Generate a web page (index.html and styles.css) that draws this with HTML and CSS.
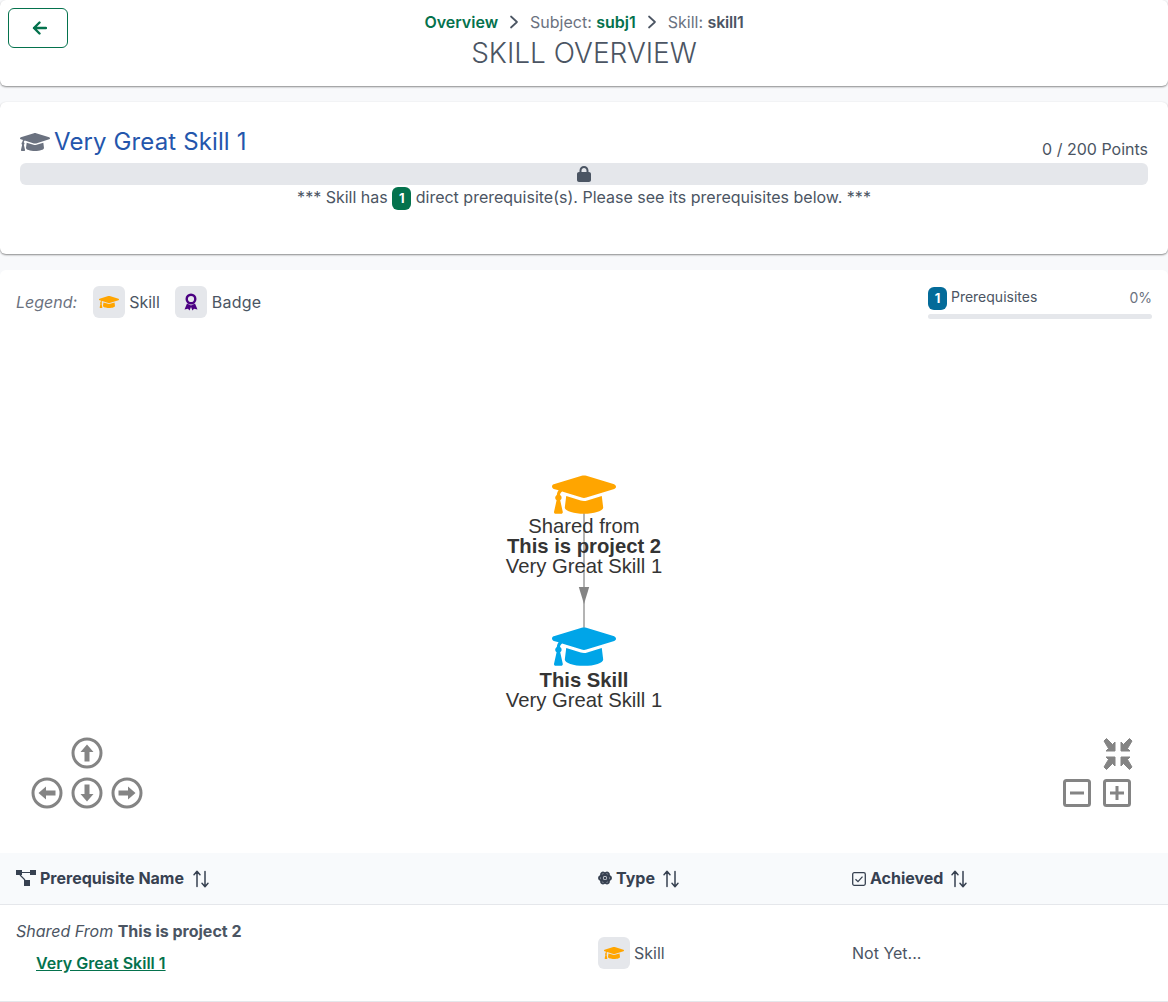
FILE: index.html
```html
<!DOCTYPE html>
<html lang="en">
<head>
  <meta charset="UTF-8">
  <title>Skill Overview</title>
  <link rel="stylesheet" href="styles.css">
</head>
<body>
  <svg class="defs">
    <defs>
      <symbol id="cap" viewBox="0 0 640 512">
        <path d="M622.340 153.200L343.400 67.500c-15.200-4.670-31.600-4.670-46.790 0L17.660 153.200c-23.540 7.230-23.540 38.360 0 45.590l48.630 14.940c-10.670 13.190-17.230 29.280-17.880 46.900C38.780 266.150 32 276.110 32 288c0 10.780 5.680 19.850 13.860 25.650L20.330 428.530C18.110 438.520 25.710 448 35.940 448h56.110c10.240 0 17.840-9.480 15.620-19.470L82.140 313.650C90.320 307.850 96 298.780 96 288c0-11.570-6.470-21.250-15.660-26.870.76-15.020 8.440-28.300 20.690-36.720L296.600 285.500c9.060 2.780 26.440 6.250 46.790 0l278.950-85.700c23.550-7.240 23.550-38.360 0-45.600zM352.790 315.090c-28.530 8.760-52.840 3.920-65.590 0l-145.020-44.550L128 384c0 35.350 85.960 64 192 64s192-28.650 192-64l-14.180-113.470-145.030 44.560z"/>
      </symbol>
      <symbol id="sort" viewBox="0 0 18 18">
        <path d="M5 16.500V1.500M2 4.700 5 1.300l3 3.400M13 1.500v15M10 13.300l3 3.400 3-3.400" fill="none" stroke="currentColor" stroke-width="1.500" stroke-linecap="round" stroke-linejoin="round"/>
      </symbol>
    </defs>
  </svg>

  <header class="card top">
    <button class="back" aria-label="Back">
      <svg width="15" height="14" viewBox="0 0 15 14"><path d="M14 7H2M7.500 1.500 2 7l5.500 5.500" fill="none" stroke="currentColor" stroke-width="2.400" stroke-linecap="round" stroke-linejoin="round"/></svg>
    </button>
    <nav class="crumbs">
      <a class="crumb-link">Overview</a>
      <svg class="chev" width="10" height="14" viewBox="0 0 10 14"><path d="M2 1.500 8 7l-6 5.500" fill="none" stroke="currentColor" stroke-width="1.700" stroke-linecap="round" stroke-linejoin="round"/></svg>
      <span>Subject: <a class="crumb-link">subj1</a></span>
      <svg class="chev" width="10" height="14" viewBox="0 0 10 14"><path d="M2 1.500 8 7l-6 5.500" fill="none" stroke="currentColor" stroke-width="1.700" stroke-linecap="round" stroke-linejoin="round"/></svg>
      <span>Skill: <b class="crumb-current">skill1</b></span>
    </nav>
    <h1>SKILL OVERVIEW</h1>
  </header>

  <section class="card skill">
    <div class="skill-head">
      <h2><svg class="skill-cap" width="30" height="24"><use href="#cap"/></svg>Very Great Skill 1</h2>
      <span class="points">0 / 200 Points</span>
    </div>
    <div class="locked-bar">
      <svg width="14" height="16" viewBox="0 0 448 512"><path d="M144 144v48H304V144c0-44.200-35.800-80-80-80s-80 35.800-80 80zM80 192V144C80 64.500 144.500 0 224 0s144 64.500 144 144v48h16c35.300 0 64 28.700 64 64V448c0 35.300-28.700 64-64 64H64c-35.300 0-64-28.700-64-64V256c0-35.300 28.700-64 64-64H80z"/></svg>
    </div>
    <p class="notice">*** Skill has <span class="tag green">1</span> direct prerequisite(s). Please see its prerequisites below. ***</p>
  </section>

  <section class="card deps">
    <div class="legend-row">
      <div class="legend">
        <i class="legend-title">Legend:</i>
        <span class="legend-item"><span class="icon-box"><svg class="orange" width="20" height="16"><use href="#cap"/></svg></span>Skill</span>
        <span class="legend-item"><span class="icon-box">
          <svg width="14" height="18" viewBox="0 0 14 18"><circle cx="7" cy="6" r="4.300" fill="none" stroke="#4b0082" stroke-width="2.400"/><path d="M3 10.500.5 16.500 4 15.800l1.500 1.700L7 14l1.500 3.500 1.500-1.700 3.500.7-2.500-6-4 2z" fill="#4b0082"/></svg>
        </span><span class="badge-label">Badge</span></span>
      </div>
      <div class="progress">
        <div class="progress-label"><span><span class="tag blue">1</span> Prerequisites</span><span class="pct">0%</span></div>
        <div class="progress-track"></div>
      </div>
    </div>

    <div class="graph">
      <svg class="graph-svg" width="1168" height="523" viewBox="0 330 1168 523">
        <path d="M584 505V628" stroke="#b4b4b4" stroke-width="2"/>
        <path d="M578.800 587H589.200L584 604z" fill="#848484"/>
        <use href="#cap" x="552" y="469" width="64" height="51.200" fill="#ffa500"/>
        <use href="#cap" x="552" y="621" width="64" height="51.200" fill="#00a5e8"/>
        <text class="node" x="584" y="533">Shared from</text>
        <text class="node" x="584" y="553" font-weight="700">This is project 2</text>
        <text class="node" x="584" y="573">Very Great Skill 1</text>
        <text class="node" x="584" y="687" font-weight="700">This Skill</text>
        <text class="node" x="584" y="707">Very Great Skill 1</text>

        <g class="ctl">
          <circle cx="87" cy="753" r="14"/><circle cx="47" cy="793" r="14"/><circle cx="87" cy="793" r="14"/><circle cx="127" cy="793" r="14"/>
          <rect x="1064.500" y="780.500" width="25" height="25" rx="2"/><rect x="1104.500" y="780.500" width="25" height="25" rx="2"/>
          <path d="M1070 793H1084M1110 793H1124M1117 786V800"/>
        </g>
        <g class="ctl-fill">
          <path d="M87 744.500l6.500 7.500H89.500v9.500h-5V752H80.500z"/>
          <path d="M87 801.500l6.500-7.500H89.500v-9.500h-5V794H80.500z"/>
          <path d="M38.500 793l7.500-6.500v4h9.500v5H46v4z"/>
          <path d="M135.500 793l-7.500-6.500v4h-9.500v5H128v4z"/>
          <path class="compress" d="M1104 741l2.500-2.500 6 6 2.500-2.500v9h-9l2.500-2.500zM1132 741l-2.500-2.500-6 6-2.500-2.500v9h9l-2.500-2.500zM1104 767l2.500 2.500 6-6 2.500 2.500v-9h-9l2.500 2.500zM1132 767l-2.500 2.500-6-6-2.500 2.500v-9h9l-2.500 2.500z"/>
        </g>
      </svg>
    </div>

    <table class="deps-table">
      <thead>
        <tr>
          <th class="col-name"><svg class="th-icon" width="20" height="16" viewBox="0 0 20 16"><path d="M0 0h6v5H0zM14 0h6v5h-6zM8 10h6v6H8z"/><path d="M6 2.500h8M4 5l5 5" stroke="currentColor" stroke-width="1.200" fill="none"/></svg>Prerequisite Name<svg class="sort" width="18" height="18"><use href="#sort"/></svg></th>
          <th class="col-type"><svg class="th-icon" width="14" height="16" viewBox="0 0 14 16"><ellipse cx="7" cy="8" rx="6" ry="3" fill="none" stroke="currentColor" stroke-width="2"/><ellipse cx="7" cy="8" rx="6" ry="3" fill="none" stroke="currentColor" stroke-width="2" transform="rotate(60 7 8)"/><ellipse cx="7" cy="8" rx="6" ry="3" fill="none" stroke="currentColor" stroke-width="2" transform="rotate(120 7 8)"/><circle cx="7" cy="8" r="1.500"/></svg>Type<svg class="sort sort-tight" width="18" height="18"><use href="#sort"/></svg></th>
          <th class="col-ach"><svg class="th-icon" width="14" height="14" viewBox="0 0 14 14"><rect x=".7" y=".7" width="12.600" height="12.600" rx="1.500" fill="none" stroke="currentColor" stroke-width="1.300"/><path d="M3.500 7.200 6 9.600l4.500-5" fill="none" stroke="currentColor" stroke-width="1.300"/></svg>Achieved<svg class="sort sort-tight" width="18" height="18"><use href="#sort"/></svg></th>
        </tr>
      </thead>
      <tbody>
        <tr>
          <td class="name-cell">
            <div class="shared"><i>Shared From</i> <b>This is project 2</b></div>
            <a class="dep-link">Very Great Skill 1</a>
          </td>
          <td><span class="type-cell"><span class="icon-box"><svg class="orange" width="20" height="16"><use href="#cap"/></svg></span>Skill</span></td>
          <td>Not Yet...</td>
        </tr>
      </tbody>
    </table>
  </section>
</body>
</html>
```

FILE: styles.css
```css
:root {
  --green: #04724d;
  --text: #4b5563;
  --dark: #374151;
  --grey-box: #e5e7eb;
  --shadow: 0 1px 2px rgba(0, 0, 0, 0.45);
}

* {
  box-sizing: border-box;
}

body {
  margin: 0;
  background: #f8f9fb;
  color: var(--text);
  font-family: Inter, "Liberation Sans", sans-serif;
  font-size: 16px;
  line-height: 24px;
}

.defs {
  position: absolute;
  width: 0;
  height: 0;
}

.card {
  background: #fff;
  border-radius: 6px;
}

.top {
  position: relative;
  height: 86px;
  padding-top: 10px;
  text-align: center;
  box-shadow: var(--shadow);
}

.back {
  position: absolute;
  left: 8px;
  top: 8px;
  display: flex;
  align-items: center;
  justify-content: center;
  width: 60px;
  height: 40px;
  padding: 0 0 0 2px;
  background: #fff;
  border: 1px solid var(--green);
  border-radius: 6px;
  color: var(--green);
}

.crumbs {
  display: flex;
  align-items: center;
  justify-content: center;
  gap: 10px;
  color: #6b7280;
}

.chev {
  color: #4b5563;
  margin: 0 1px;
}

.crumb-link {
  color: var(--green);
  font-weight: 600;
}

.crumb-current {
  font-weight: 600;
  color: var(--text);
  letter-spacing: -0.2px;
}

h1 {
  margin: 1px 0 0;
  font-size: 28px;
  font-weight: 300;
  line-height: 36px;
  color: var(--text);
}

.skill {
  height: 152px;
  margin-top: 16px;
  padding: 20px 20px 0;
  box-shadow: var(--shadow);
}

.skill-head {
  display: flex;
  align-items: flex-end;
  justify-content: space-between;
  height: 41px;
}

h2 {
  display: flex;
  align-items: center;
  margin: 0 0 5px;
  font-size: 24px;
  font-weight: 400;
  letter-spacing: 0.12px;
  line-height: 32px;
  color: #2456ac;
}

.points {
  margin-bottom: 2px;
}

.skill-cap {
  fill: #6b7280;
  margin-right: 4px;
}

.locked-bar {
  display: flex;
  align-items: center;
  justify-content: center;
  height: 22px;
  background: var(--grey-box);
  border-radius: 6px;
  fill: var(--text);
}

.notice {
  margin: 0;
  text-align: center;
}

.tag {
  display: inline-block;
  min-width: 19px;
  height: 23px;
  border-radius: 6px;
  color: #fff;
  font-size: 13px;
  font-weight: 700;
  line-height: 23px;
  text-align: center;
  vertical-align: middle;
}

.green {
  background: var(--green);
}

.blue {
  background: #046b99;
}

.deps {
  margin-top: 16px;
}

.legend-row {
  display: flex;
  justify-content: space-between;
  height: 60px;
  padding: 16px 16px 0;
}

.legend {
  display: flex;
  align-items: flex-start;
  gap: 15px;
}

.legend-title {
  line-height: 32px;
  color: #6b7280;
  margin-right: 1px;
}

.legend-item {
  display: flex;
  align-items: center;
  gap: 4px;
}

.badge-label {
  margin-left: 1px;
  letter-spacing: 0.2px;
}

.icon-box {
  display: flex;
  align-items: center;
  justify-content: center;
  width: 32px;
  height: 32px;
  background: var(--grey-box);
  border-radius: 6px;
}

.orange {
  fill: #ffa500;
}

.progress {
  width: 224px;
}

.progress-label {
  display: flex;
  justify-content: space-between;
  align-items: center;
  height: 23px;
  font-size: 14px;
}

.pct {
  color: #6b7280;
}

.progress-track {
  height: 5px;
  margin-top: 5px;
  background: var(--grey-box);
  border-radius: 3px;
}

.graph {
  height: 523px;
}

.graph-svg {
  display: block;
}

.node {
  font-family: "Liberation Sans", Arial, sans-serif;
  font-size: 20.25px;
  fill: #343434;
  text-anchor: middle;
}

.ctl {
  fill: none;
  stroke: #848484;
  stroke-width: 3;
}

.ctl-fill {
  fill: #848484;
}

.compress {
  stroke: #848484;
  stroke-width: 1;
}

.deps-table {
  width: 100%;
  border-collapse: separate;
  border-spacing: 0;
  table-layout: fixed;
  background: #fff;
}

th {
  height: 52px;
  padding: 0 16px 2px;
  background: #f8fafc;
  border-bottom: 1px solid var(--grey-box);
  color: var(--dark);
  font-weight: 700;
  text-align: left;
}

.col-name {
  width: 582px;
}

.col-type {
  width: 254px;
}

.th-icon {
  fill: currentColor;
  margin-right: 4px;
  vertical-align: -2px;
}

.sort {
  margin-left: 8px;
  vertical-align: -4px;
}

.sort-tight {
  margin-left: 7px;
}

td {
  height: 97px;
  padding: 0 16px 1px;
  border-bottom: 1px solid var(--grey-box);
}

.name-cell {
  padding-top: 14px;
  padding-bottom: 15px;
  vertical-align: top;
}

.shared {
  margin-bottom: 8px;
}

.shared b {
  font-weight: 700;
}

.dep-link {
  margin-left: 20px;
  color: var(--green);
  font-weight: 600;
  text-decoration: underline;
}

.type-cell {
  display: flex;
  align-items: center;
  gap: 4px;
}
```
